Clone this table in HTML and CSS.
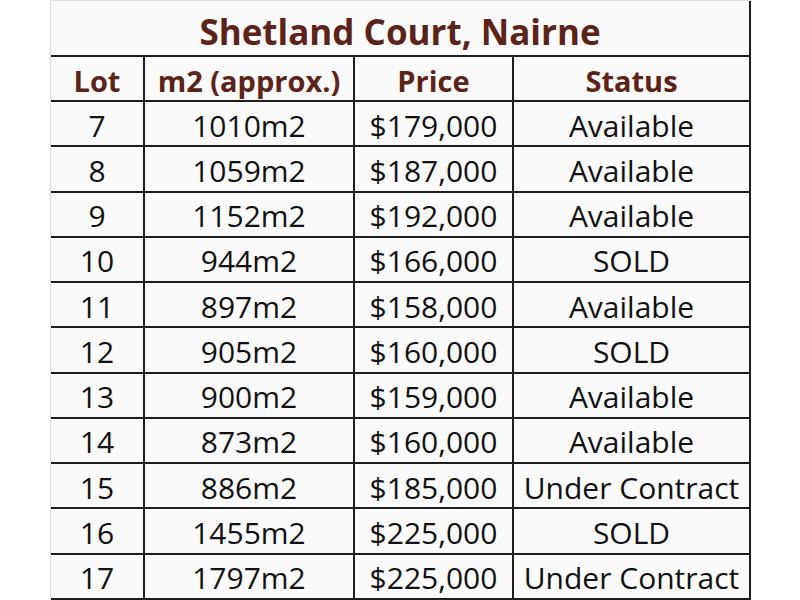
FILE: index.html
```html
<!DOCTYPE html>
<html>
<head>
<meta charset="utf-8">
<link rel="stylesheet" href="styles.css">
</head>
<body>
<div class="sheet">
  <div class="cell title">Shetland Court, Nairne</div>
  <div class="cell head">Lot</div>
  <div class="cell head">m2 (approx.)</div>
  <div class="cell head">Price</div>
  <div class="cell head">Status</div>

  <div class="cell">7</div><div class="cell">1010m2</div><div class="cell">$179,000</div><div class="cell">Available</div>
  <div class="cell">8</div><div class="cell">1059m2</div><div class="cell">$187,000</div><div class="cell">Available</div>
  <div class="cell">9</div><div class="cell">1152m2</div><div class="cell">$192,000</div><div class="cell">Available</div>
  <div class="cell">10</div><div class="cell">944m2</div><div class="cell">$166,000</div><div class="cell">SOLD</div>
  <div class="cell">11</div><div class="cell">897m2</div><div class="cell">$158,000</div><div class="cell">Available</div>
  <div class="cell">12</div><div class="cell">905m2</div><div class="cell">$160,000</div><div class="cell">SOLD</div>
  <div class="cell">13</div><div class="cell">900m2</div><div class="cell">$159,000</div><div class="cell">Available</div>
  <div class="cell">14</div><div class="cell">873m2</div><div class="cell">$160,000</div><div class="cell">Available</div>
  <div class="cell">15</div><div class="cell">886m2</div><div class="cell">$185,000</div><div class="cell">Under Contract</div>
  <div class="cell">16</div><div class="cell">1455m2</div><div class="cell">$225,000</div><div class="cell">SOLD</div>
  <div class="cell">17</div><div class="cell">1797m2</div><div class="cell">$225,000</div><div class="cell">Under Contract</div>
</div>
</body>
</html>
```
FILE: styles.css
```css
html, body {
  margin: 0;
  padding: 0;
  background: #ffffff;
}

body {
  font-family: "Open Sans", Lato, "Liberation Sans", sans-serif;
  color: #111111;
}

.sheet {
  margin-left: 50px;
  display: grid;
  grid-template-columns: 92px 208px 157px 235px;
  grid-template-rows: 54px 43px repeat(11, 43.27px);
  gap: 2px;
  background: #1e1e1e;
  border-left: 1px solid #d8d8d8;
  border-top: 1px solid #e2e2e2;
  padding: 0 2px 2px 0;
  box-sizing: content-box;
  width: 698px;
}

.cell {
  background: #fafafa;
  display: flex;
  align-items: center;
  justify-content: center;
  font-size: 30px;
  line-height: 1;
  padding-top: 4px;
  box-sizing: border-box;
  white-space: nowrap;
}

.title {
  grid-column: 1 / -1;
  font-size: 35px;
  font-weight: 700;
  color: #5c2419;
  padding-top: 6px;
}

.head {
  font-weight: 700;
  color: #5c2419;
  font-size: 29px;
}
```
